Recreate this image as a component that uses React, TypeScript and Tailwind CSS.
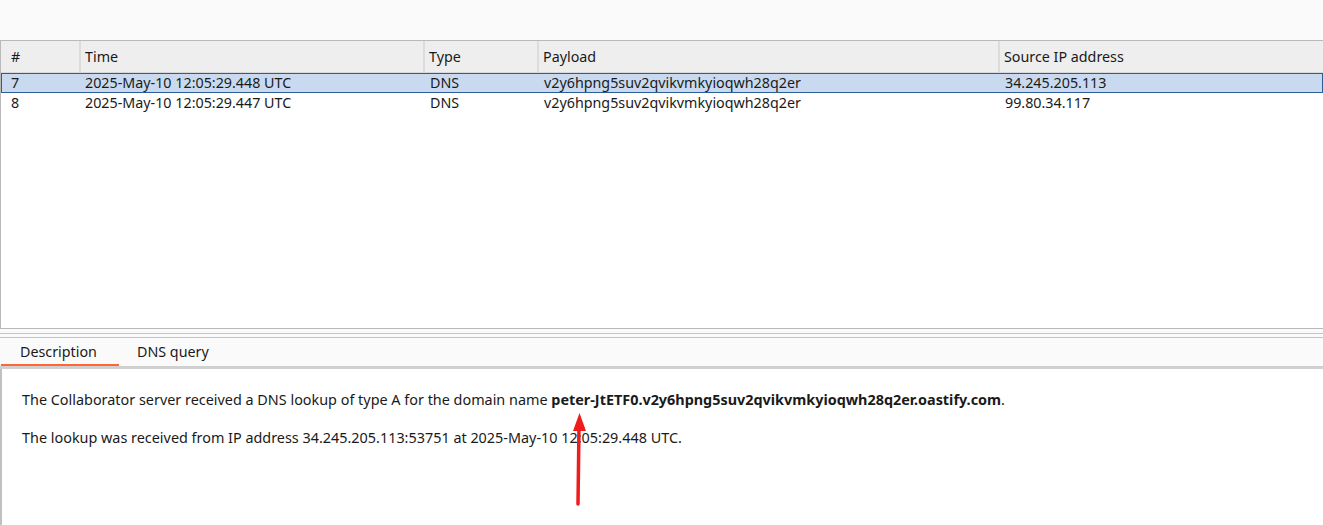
const rows = [
  { id: '7', time: '2025-May-10 12:05:29.448 UTC', type: 'DNS', payload: 'v2y6hpng5suv2qvikvmkyioqwh28q2er', ip: '34.245.205.113' },
  { id: '8', time: '2025-May-10 12:05:29.447 UTC', type: 'DNS', payload: 'v2y6hpng5suv2qvikvmkyioqwh28q2er', ip: '99.80.34.117' },
]

const cols = [
  { label: '#', w: 'w-[80px]' },
  { label: 'Time', w: 'w-[344px]' },
  { label: 'Type', w: 'w-[114px]' },
  { label: 'Payload', w: 'w-[461px]' },
  { label: 'Source IP address', w: 'flex-1' },
]

export default function App() {
  return (
    <div
      className="relative w-[1323px] h-[525px] overflow-hidden bg-[#fafafa] flex flex-col text-[14.3px] text-[#1a1a1a]"
      style={{ fontFamily: '"Noto Sans", "Open Sans", sans-serif' }}
    >
      <div className="h-[40px] shrink-0" />

      {/* Interactions table */}
      <div className="h-[289px] shrink-0 bg-white border-t border-l border-b border-[#b9b9b9] flex flex-col">
        <div className="h-[32px] shrink-0 flex bg-[#eeeeee] border-b border-[#d8d8d8]">
          {cols.map((c, i) => (
            <div
              key={c.label}
              className={`${c.w} flex items-center pl-[4px] pt-px ${i < cols.length - 1 ? 'border-r-2 border-[#dcdcdc]' : ''}`}
            >
              <span className={i === 0 ? 'pl-[6px]' : ''}>{c.label}</span>
            </div>
          ))}
        </div>
        {rows.map((r, i) => (
          <div
            key={r.id}
            className={`h-[20px] flex items-center leading-none ${i === 0 ? 'bg-[#c9daf0] border border-[#2d5e99]' : 'bg-white border border-transparent'}`}
          >
            <div className="w-[80px] pl-[9px]">{r.id}</div>
            <div className="w-[344px] pl-[3px]">{r.time}</div>
            <div className="w-[114px] pl-[4px]">{r.type}</div>
            <div className="w-[461px] pl-[4px]">{r.payload}</div>
            <div className="flex-1 pl-[4px]">{r.ip}</div>
          </div>
        ))}
      </div>

      <div className="h-[4px] shrink-0" />
      <div className="h-px shrink-0 bg-[#c4c4c4]" />
      <div className="h-[3px] shrink-0" />
      <div className="h-px shrink-0 bg-[#c4c4c4]" />

      {/* Tabs */}
      <div className="h-[28px] shrink-0 flex items-end pl-px">
        <div className="w-[118px] h-full flex flex-col">
          <div className="flex-1 flex items-center pl-[19px] pt-[2px]">Description</div>
          <div className="h-[2px] bg-[#ff6633]" />
        </div>
        <div className="h-full flex flex-col pb-[2px]">
          <div className="flex-1 flex items-center pl-[18px] pt-[2px]">DNS query</div>
        </div>
      </div>
      <div className="h-[3px] shrink-0 bg-[#d0d0d0]" />

      {/* Description */}
      <div className="flex-1 bg-white border-l-2 border-[#c0c0c0] pl-[20px] pt-[20px] text-[14.4px]">
        <p>
          The Collaborator server received a DNS lookup of type A for the domain name{' '}
          <span className="font-bold">peter-JtETF0.v2y6hpng5suv2qvikvmkyioqwh28q2er.oastify.com</span>.
        </p>
        <p className="mt-[16px]">
          The lookup was received from IP address 34.245.205.113:53751 at 2025-May-10 12:05:29.448 UTC.
        </p>
      </div>

      <svg className="absolute left-0 top-0 pointer-events-none" width="1323" height="525">
        <line x1="578" y1="504" x2="579" y2="426" stroke="#f01c1c" strokeWidth="3.5" strokeLinecap="round" />
        <polygon points="579.5,413 573,431 586,431" fill="#f01c1c" />
      </svg>
    </div>
  )
}
